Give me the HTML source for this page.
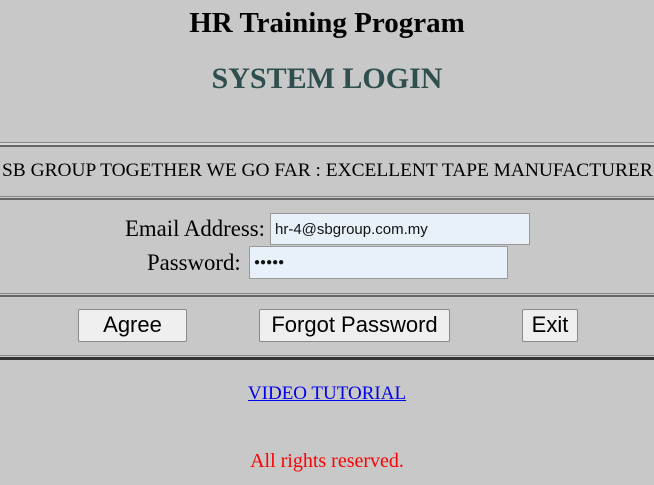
<!DOCTYPE html>
<html><head><style>
body{margin:0;width:654px;height:485px;background:#c8c8c8;position:relative;overflow:hidden;font-family:"Liberation Serif",serif;}
.a{position:absolute;white-space:nowrap;}
.c{left:0;width:654px;text-align:center;}
.l{position:absolute;left:0;width:654px;}
.inp{position:absolute;background:#e8f0fa;border:1px solid #999;font-family:"Liberation Sans",sans-serif;font-size:15px;box-sizing:border-box;padding:7px 0 0 4px;color:#111;}
.btn{position:absolute;background:#efefef;border:1px solid #8a8a8a;border-radius:2px;font-family:"Liberation Sans",sans-serif;font-size:22px;text-align:center;box-sizing:border-box;line-height:30px;color:#000;}
</style></head><body>
<div class="a c" style="top:7px;font-size:29px;font-weight:bold;">HR Training Program</div>
<div class="a c" style="top:62px;font-size:30px;font-weight:bold;color:#2f4f4f;">SYSTEM LOGIN</div>
<div class="l" style="top:142px;height:1px;background:#888"></div>
<div class="l" style="top:143px;height:2px;background:#d8d8d8"></div>
<div class="l" style="top:145px;height:2px;background:#666"></div>
<div class="a" style="left:2px;top:160px;font-size:19.4px;">SB GROUP TOGETHER WE GO FAR : EXCELLENT TAPE MANUFACTURER</div>
<div class="l" style="top:196px;height:1px;background:#888"></div>
<div class="l" style="top:198px;height:2px;background:#666"></div>
<div class="a" style="left:125px;top:216px;font-size:22.8px;">Email Address:</div>
<div class="inp" style="left:270px;top:213px;width:260px;height:32px;">hr-4@sbgroup.com.my</div>
<div class="a" style="left:147px;top:250px;font-size:22.8px;">Password:</div>
<div class="inp" style="left:249px;top:246px;width:259px;height:33px;font-size:10px;padding-top:10px;">●●●●●</div>
<div class="l" style="top:293px;height:1px;background:#888"></div>
<div class="l" style="top:295px;height:2px;background:#666"></div>
<div class="btn" style="left:78px;top:309px;width:109px;height:33px;">Agree</div>
<div class="btn" style="left:259px;top:309px;width:191px;height:33px;">Forgot Password</div>
<div class="btn" style="left:522px;top:309px;width:56px;height:33px;">Exit</div>
<div class="l" style="top:355px;height:1px;background:#888"></div>
<div class="l" style="top:357px;height:3px;background:#333"></div>
<div class="a c" style="top:383px;font-size:19px;color:#00e;text-decoration:underline;">VIDEO TUTORIAL</div>
<div class="a c" style="top:450px;font-size:20px;color:#f00;">All rights reserved.</div>
</body></html>
